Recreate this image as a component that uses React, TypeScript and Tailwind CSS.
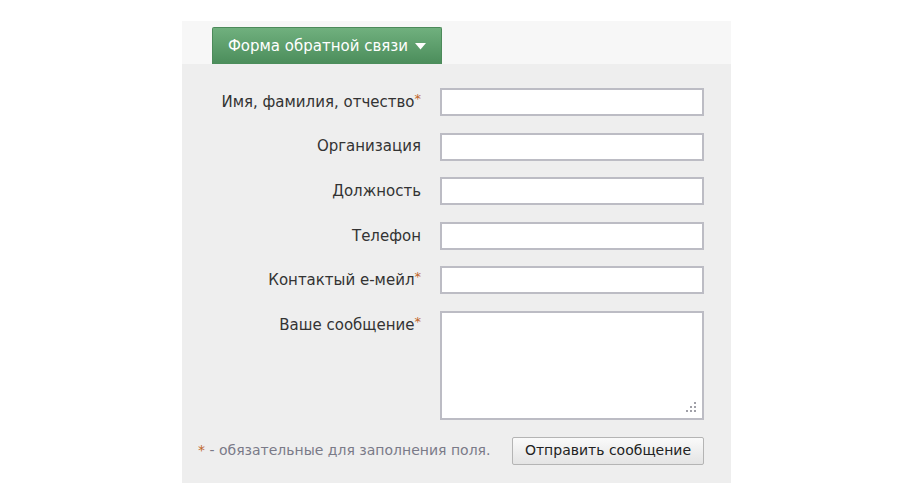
export default function App() {
  const fields = [
    { label: "Имя, фамилия, отчество", req: true },
    { label: "Организация", req: false },
    { label: "Должность", req: false },
    { label: "Телефон", req: false },
    { label: "Контактый е-мейл", req: true },
  ];

  return (
    <div className="min-h-[500px] bg-white pl-[182px] pt-[21px] font-['DejaVu_Sans',Verdana,sans-serif]">
      <div className="flex w-[549px] flex-col">
        <div className="flex h-[43px] items-end bg-[#f7f7f7] pl-[30px]">
          <div className="flex h-[37px] w-[230px] items-center justify-center gap-[7px] rounded-t-[2px] border border-b-0 border-[#4c8a5a] bg-gradient-to-b from-[#70b07e] to-[#4b8d5b] text-[15px] text-white">
            <span>Форма обратной связи</span>
            <svg width="11" height="7" viewBox="0 0 11 7">
              <path d="M0 0h11L5.5 6.5z" fill="#fff" />
            </svg>
          </div>
        </div>
        <div className="flex flex-col bg-[#eeeeee] pb-[18px] pr-[27px] pt-[24px]">
          {fields.map((f) => (
            <div key={f.label} className="mb-[16.6px] flex items-center">
              <label className="w-[258px] pr-[19px] text-right text-[15px] text-[#333]">
                {f.label}
                {f.req && <span className="relative -top-[4px] text-[13px] text-[#c0652a]">*</span>}
              </label>
              <input className="h-[28px] w-[264px] border-2 border-[#bcbcc4] bg-white" />
            </div>
          ))}
          <div className="flex items-start">
            <label className="w-[258px] pr-[19px] pt-[3px] text-right text-[15px] text-[#333]">
              Ваше сообщение
              <span className="relative -top-[4px] text-[13px] text-[#c0652a]">*</span>
            </label>
            <div className="relative">
              <textarea className="block h-[109px] w-[264px] resize-none border-2 border-[#bcbcc4] bg-white" />
              <svg className="absolute bottom-[7px] right-[7px]" width="12" height="12" viewBox="0 0 12 12">
                <g fill="#a0a0a8">
                  <rect x="9" y="1" width="2" height="2" />
                  <rect x="5" y="5" width="2" height="2" />
                  <rect x="9" y="5" width="2" height="2" />
                  <rect x="1" y="9" width="2" height="2" />
                  <rect x="5" y="9" width="2" height="2" />
                  <rect x="9" y="9" width="2" height="2" />
                </g>
              </svg>
            </div>
          </div>
          <div className="mt-[17px] flex items-center justify-between pl-[16px]">
            <span className="text-[14px] text-[#7a7a88]">
              <span className="text-[#c0652a]">*</span> - обязательные для заполнения поля.
            </span>
            <button className="h-[28px] w-[192px] rounded-[2px] border border-[#b4b4b4] bg-gradient-to-b from-[#fafafa] to-[#e4e4e4] text-[14px] text-[#222]">
              Отправить сообщение
            </button>
          </div>
        </div>
      </div>
    </div>
  );
}
